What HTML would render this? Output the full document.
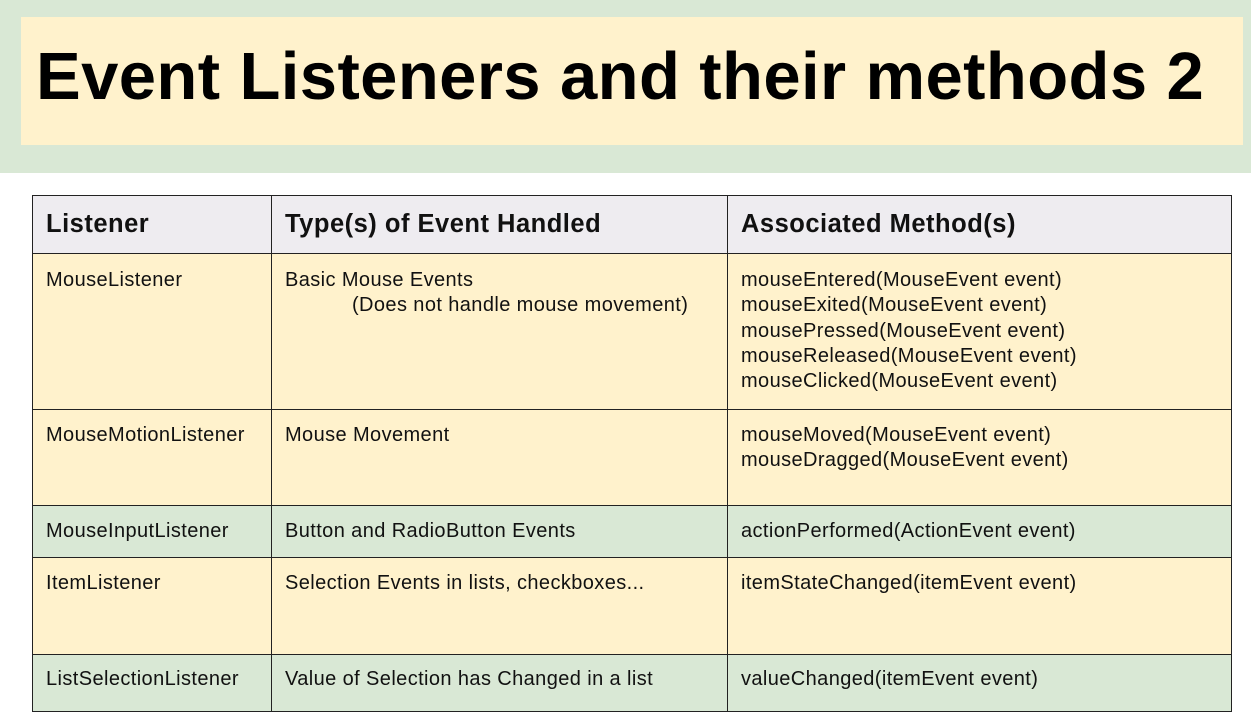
<!DOCTYPE html>
<html><head><style>
*{margin:0;padding:0;box-sizing:border-box}
body{width:1251px;height:725px;background:#fff;position:relative;overflow:hidden;font-family:"Liberation Sans",Arial,sans-serif;color:#111}
.band{position:absolute;left:0;top:0;width:1251px;height:173px;background:#d9e8d5}
.title{position:absolute;left:21px;top:17px;width:1222px;height:128px;background:#fff2cc}
.title div{position:absolute;left:15px;top:21px;font-size:67px;font-weight:bold;color:#000;white-space:nowrap;letter-spacing:0.4px}
.t{position:absolute;font-size:20px;line-height:25.3px;white-space:nowrap;letter-spacing:0.4px}
.h{font-size:25.5px;font-weight:bold;letter-spacing:0.5px}
</style></head><body>
<div class="band"></div>
<div class="title"><div>Event Listeners and their methods 2</div></div>
<div style="position:absolute;left:32px;top:195px;width:1200px;height:517px;border:1.5px solid #222;overflow:hidden">
<div style="position:absolute;left:0;top:0;width:1200px;height:57px;background:#eeecf0"></div>
<div style="position:absolute;left:0;top:57px;width:1200px;height:252px;background:#fff2cc"></div>
<div style="position:absolute;left:0;top:309px;width:1200px;height:52px;background:#d9e8d5"></div>
<div style="position:absolute;left:0;top:361px;width:1200px;height:97px;background:#fff2cc"></div>
<div style="position:absolute;left:0;top:458px;width:1200px;height:60px;background:#d9e8d5"></div>
<div style="position:absolute;left:0;top:57px;width:1200px;border-top:1.5px solid #222"></div>
<div style="position:absolute;left:0;top:213px;width:1200px;border-top:1.5px solid #222"></div>
<div style="position:absolute;left:0;top:309px;width:1200px;border-top:1.5px solid #222"></div>
<div style="position:absolute;left:0;top:361px;width:1200px;border-top:1.5px solid #222"></div>
<div style="position:absolute;left:0;top:458px;width:1200px;border-top:1.5px solid #222"></div>
<div style="position:absolute;left:238px;top:0;height:520px;border-left:1.5px solid #222"></div>
<div style="position:absolute;left:694px;top:0;height:520px;border-left:1.5px solid #222"></div>
</div>
<div class="t h" style="left:46px;top:212px">Listener</div>
<div class="t h" style="left:285px;top:212px">Type(s) of Event Handled</div>
<div class="t h" style="left:741px;top:212px">Associated Method(s)</div>
<div class="t" style="left:46px;top:268px">MouseListener</div>
<div class="t" style="left:285px;top:268px">Basic Mouse Events<br><span style="padding-left:67px">(Does not handle mouse movement)</span></div>
<div class="t" style="left:741px;top:268px">mouseEntered(MouseEvent event)<br>mouseExited(MouseEvent event)<br>mousePressed(MouseEvent event)<br>mouseReleased(MouseEvent event)<br>mouseClicked(MouseEvent event)</div>
<div class="t" style="left:46px;top:423px">MouseMotionListener</div>
<div class="t" style="left:285px;top:423px">Mouse Movement</div>
<div class="t" style="left:741px;top:423px">mouseMoved(MouseEvent event)<br>mouseDragged(MouseEvent event)</div>
<div class="t" style="left:46px;top:519px">MouseInputListener</div>
<div class="t" style="left:285px;top:519px">Button and RadioButton Events</div>
<div class="t" style="left:741px;top:519px">actionPerformed(ActionEvent event)</div>
<div class="t" style="left:46px;top:571px">ItemListener</div>
<div class="t" style="left:285px;top:571px">Selection Events in lists, checkboxes...</div>
<div class="t" style="left:741px;top:571px">itemStateChanged(itemEvent event)</div>
<div class="t" style="left:46px;top:667px">ListSelectionListener</div>
<div class="t" style="left:285px;top:667px">Value of Selection has Changed in a list</div>
<div class="t" style="left:741px;top:667px">valueChanged(itemEvent event)</div>
</body></html>
